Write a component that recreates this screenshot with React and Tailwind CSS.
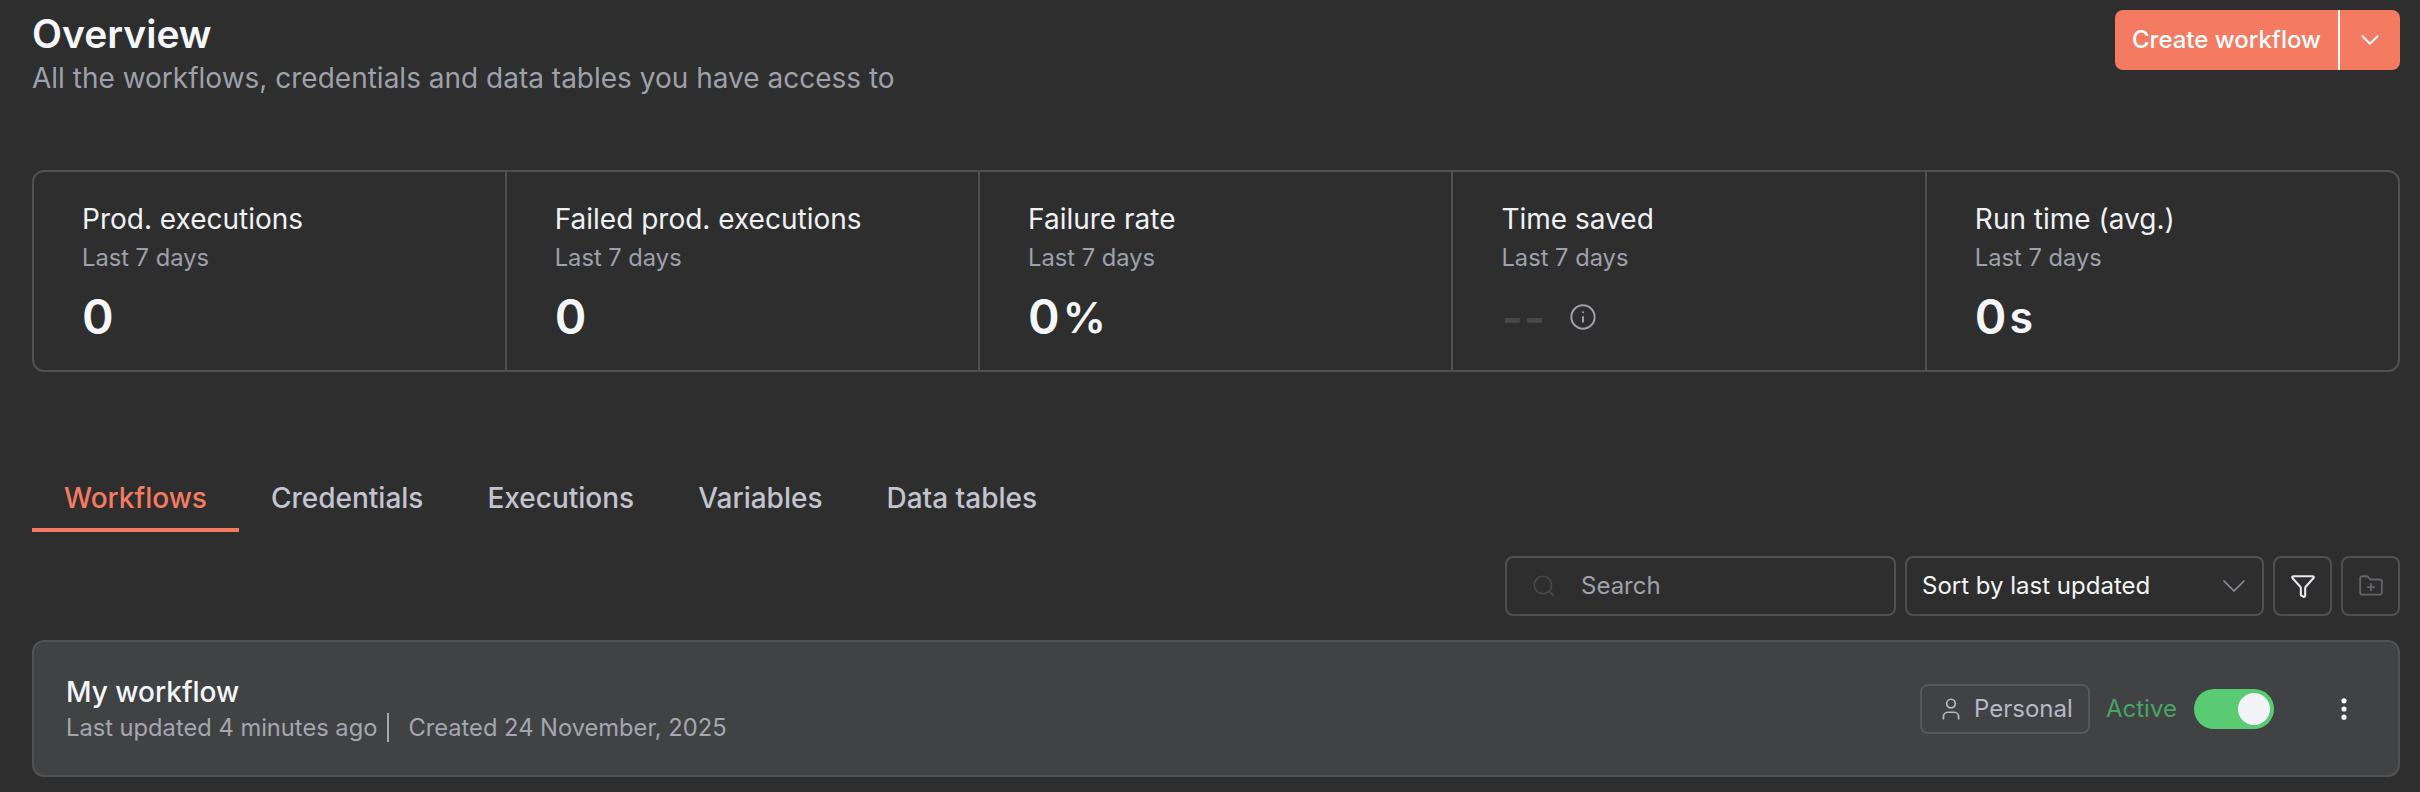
import React from "react";
import { ChevronDown, EllipsisVertical, FolderPlus, Funnel, Info, Search, User } from "lucide-react";

const stats = [
  { label: "Prod. executions", value: "0" },
  { label: "Failed prod. executions", value: "0" },
  { label: "Failure rate", value: "0", unit: "%" },
  { label: "Time saved", empty: true },
  { label: "Run time (avg.)", value: "0", unit: "s" },
];

const tabs = ["Workflows", "Credentials", "Executions", "Variables", "Data tables"];

const StatCell = ({ stat, last }) => (
  <div className={`flex flex-col pl-[48px] pt-[28px] ${last ? "" : "border-r-2 border-[#4f5052]"}`}>
    <div className="text-[28px] leading-[38px] font-normal text-[#f0f1f5]">{stat.label}</div>
    <div className="text-[23.7px] leading-[39px] text-[#9ea0ac]">Last 7 days</div>
    {stat.empty ? (
      <div className="mt-[14px] flex h-[52px] items-center gap-[23px]">
        <span className="text-[46px] font-semibold leading-none tracking-[1px] text-[#47484b]">--</span>
        <Info size={28} strokeWidth={1.7} className="text-[#9ea0ac]" />
      </div>
    ) : (
      <div className="mt-[14px] flex h-[52px] items-center text-[48px] font-semibold leading-none text-[#f5f6fa]">
        {stat.value}
        {stat.unit && <span className="ml-[3px] text-[43px]">{stat.unit}</span>}
      </div>
    )}
  </div>
);

const App = () => {
  return (
    <div className="h-[792px] w-[2420px] overflow-hidden bg-[#2e2e2e] pl-[32px] pr-[20px] font-['Inter',sans-serif]">
      <div className="flex h-[170px] items-start justify-between">
        <div className="pt-[9px]">
          <h1 className="text-[39px] leading-[50px] font-semibold text-[#f5f6fa]">Overview</h1>
          <p className="mt-[4px] text-[28px] leading-[30px] text-[#9ea0ac]">
            All the workflows, credentials and data tables you have access to
          </p>
        </div>
        <div className="mt-[10px] flex h-[60px] w-[285px] items-center rounded-[8px] bg-[#f47b62] text-white">
          <span className="flex h-full flex-1 items-center justify-center text-[24px] font-medium">Create workflow</span>
          <span className="h-full w-[2px] bg-white" />
          <span className="flex h-full w-[60px] items-center justify-center">
            <ChevronDown size={30} strokeWidth={1.5} />
          </span>
        </div>
      </div>

      <div className="grid h-[202px] grid-cols-[472.7px_473.4px_473.4px_473.4px_1fr] rounded-[12px] border-2 border-[#4f5052]">
        {stats.map((stat, i) => (
          <StatCell key={stat.label} stat={stat} last={i === stats.length - 1} />
        ))}
      </div>

      <div className="mt-[100px] flex h-[60px]">
        {tabs.map((tab, i) => (
          <div
            key={tab}
            className={`flex h-[60px] items-center border-b-4 px-[32px] pb-[4px] text-[28px] font-medium ${
              i === 0 ? "border-[#f47b62] text-[#f47b62]" : "border-transparent text-[#c3c4cf]"
            }`}
          >
            {tab}
          </div>
        ))}
      </div>

      <div className="mt-[24px] flex h-[60px] justify-end gap-[9px]">
        <div className="flex w-[391px] items-center rounded-[8px] border-2 border-[#4f5052] pl-[24px]">
          <Search size={26} strokeWidth={1.6} className="text-[#47484b]" />
          <span className="ml-[24px] text-[24px] text-[#9ea0ac]">Search</span>
        </div>
        <div className="flex w-[359px] items-center justify-between rounded-[8px] border-2 border-[#4f5052] pl-[15px] pr-[8px]">
          <span className="text-[24px] text-[#f4f4f6]">Sort by last updated</span>
          <ChevronDown size={40} strokeWidth={1} className="text-[#8d8e96]" />
        </div>
        <div className="flex w-[59px] items-center justify-center rounded-[8px] border-2 border-[#4f5052]">
          <Funnel size={26} strokeWidth={1.9} className="text-[#e8eaf2]" />
        </div>
        <div className="flex w-[59px] items-center justify-center rounded-[8px] border-2 border-[#4f5052]">
          <FolderPlus size={26} strokeWidth={1.7} className="text-[#626366]" />
        </div>
      </div>

      <div className="mt-[24px] flex h-[137px] items-center justify-between rounded-[12px] border-2 border-[#505153] bg-[#414244] pl-[32px] pr-[40px]">
        <div>
          <div className="text-[28px] leading-[34px] font-medium text-[#f5f6fa]">My workflow</div>
          <div className="mt-[4px] flex items-center text-[23.7px] leading-[30px] text-[#a5a6b0]">
            <span>Last updated 4 minutes ago</span>
            <span className="ml-[10px] h-[29px] w-[2px] bg-[#a5a6b0]" />
            <span className="ml-[19px]">Created 24 November, 2025</span>
          </div>
        </div>
        <div className="flex items-center">
          <div className="flex h-[50px] w-[170px] items-center gap-[10px] rounded-[8px] border-2 border-[#56575a] pl-[16px] text-[24px] text-[#b6b7c9]">
            <User size={26} strokeWidth={1.6} />
            <span>Personal</span>
          </div>
          <span className="ml-[16px] w-[72px] text-[24px] text-[#46a566]">Active</span>
          <div className="ml-[16px] flex h-[40px] w-[80px] items-center justify-end rounded-full bg-[#5acb72] pr-[4px]">
            <div className="h-[32px] w-[32px] rounded-full bg-[#f2f4f8]" />
          </div>
          <EllipsisVertical size={28} strokeWidth={2.4} className="ml-[56px] text-white" />
        </div>
      </div>
    </div>
  );
};

export default App;
